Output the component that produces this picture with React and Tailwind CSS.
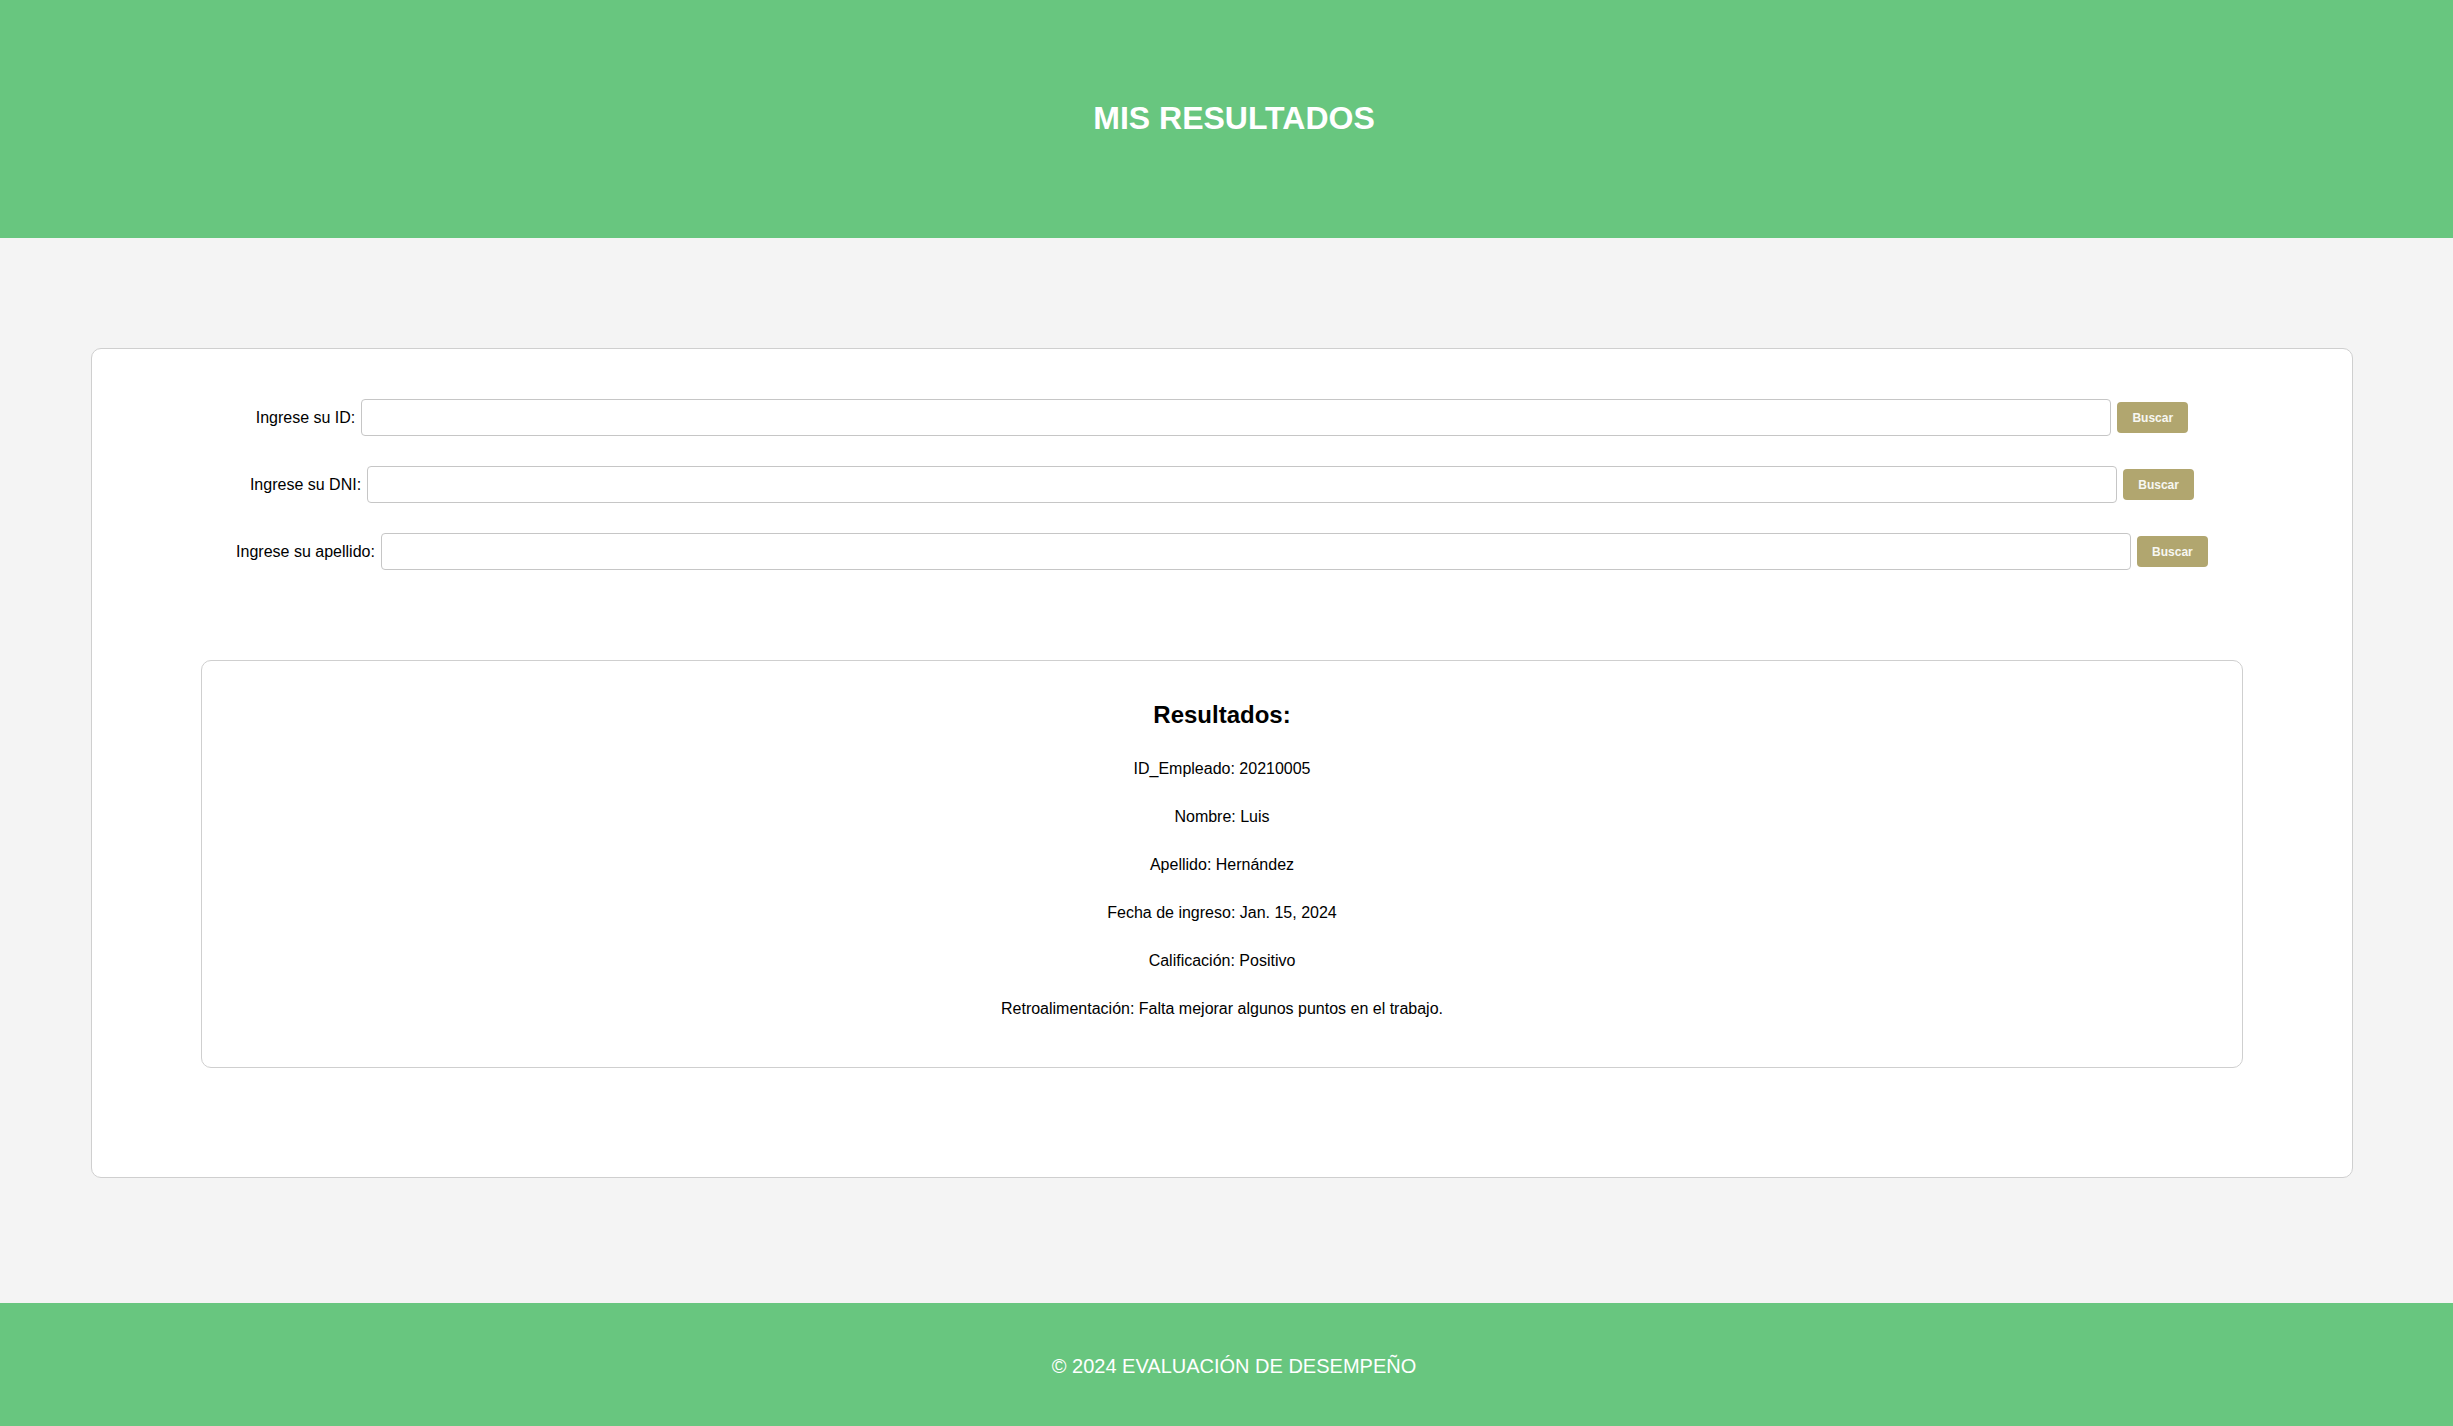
export default function App() {
  const campos = [
    { id: 'id', label: 'Ingrese su ID:' },
    { id: 'dni', label: 'Ingrese su DNI:' },
    { id: 'apellido', label: 'Ingrese su apellido:' },
  ]

  const resultados = [
    ['ID_Empleado', '20210005'],
    ['Nombre', 'Luis'],
    ['Apellido', 'Hernández'],
    ['Fecha de ingreso', 'Jan. 15, 2024'],
    ['Calificación', 'Positivo'],
    ['Retroalimentación', 'Falta mejorar algunos puntos en el trabajo.'],
  ]

  return (
    <div className="min-h-screen bg-[#f4f4f4] text-black font-['Liberation_Sans',Arial,sans-serif]">
      {/* Header */}
      <header className="h-[238px] bg-[#68c67f] flex items-center justify-center pl-[15px]">
        <h1 className="text-[32px] leading-[36px] font-bold text-white -mt-[2px]">MIS RESULTADOS</h1>
      </header>

      <main className="pt-[110px] pb-[125px]">
        <div className="ml-[91px] w-[2262px] bg-white border border-[#cfcfcf] rounded-[10px] px-[109px] pt-[50px] pb-[109px]">
          {/* Search form */}
          <div className="flex flex-col gap-[30px]">
            {campos.map((c) => (
              <div key={c.id} className="flex items-center justify-center gap-[6px] h-[37px]">
                <label htmlFor={c.id} className="text-[16px] leading-[18px]">{c.label}</label>
                <input
                  id={c.id}
                  type="text"
                  className="w-[1750px] h-[37px] border border-[#c6c6c6] rounded-[4px] bg-white px-2 outline-none"
                />
                <button
                  type="button"
                  className="w-[71px] h-[31px] rounded-[4px] bg-[#b1a66f] text-[#f7f7f2] text-[12px] font-bold"
                >
                  Buscar
                </button>
              </div>
            ))}
          </div>

          {/* Results */}
          <div className="mt-[90px] h-[408px] border border-[#cfcfcf] rounded-[10px] pt-[40px] text-center">
            <h2 className="text-[24px] leading-[28px] font-bold">Resultados:</h2>
            <div className="mt-[16px]">
              {resultados.map(([k, v]) => (
                <p key={k} className="text-[16px] leading-[48px]">
                  {k}: {v}
                </p>
              ))}
            </div>
          </div>
        </div>
      </main>

      {/* Footer */}
      <footer className="h-[123px] bg-[#68c67f] flex items-center justify-center pl-[15px] pt-[3px]">
        <p className="text-[20px] leading-[23px] text-white">© 2024 EVALUACIÓN DE DESEMPEÑO</p>
      </footer>
    </div>
  )
}
